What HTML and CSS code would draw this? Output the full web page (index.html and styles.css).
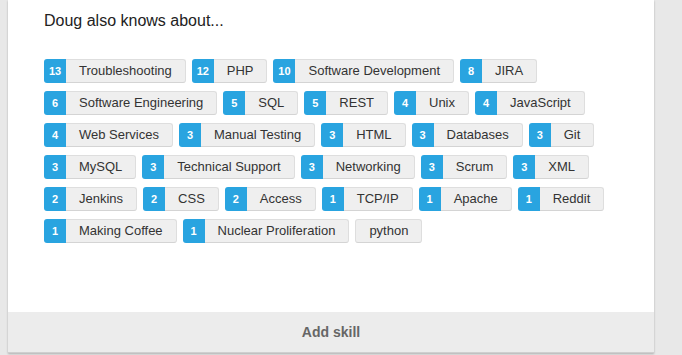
FILE: index.html
```html
<!doctype html>
<html lang="en">
    <head>
        <meta charset="UTF-8" />
        <title>Doug also knows about</title>
        <link rel="stylesheet" href="styles.css">
    </head>
    <body>
        <div class="card">
            <div class="card-body">
                <h3 class="card-title">Doug also knows about...</h3>

                <ul class="skills">
                    <li class="skill"><span class="count">13</span><span class="name">Troubleshooting</span></li>
                    <li class="skill"><span class="count">12</span><span class="name">PHP</span></li>
                    <li class="skill"><span class="count">10</span><span class="name">Software Development</span></li>
                    <li class="skill"><span class="count">8</span><span class="name">JIRA</span></li>
                    <li class="skill"><span class="count">6</span><span class="name">Software Engineering</span></li>
                    <li class="skill"><span class="count">5</span><span class="name">SQL</span></li>
                    <li class="skill"><span class="count">5</span><span class="name">REST</span></li>
                    <li class="skill"><span class="count">4</span><span class="name">Unix</span></li>
                    <li class="skill"><span class="count">4</span><span class="name">JavaScript</span></li>
                    <li class="skill"><span class="count">4</span><span class="name">Web Services</span></li>
                    <li class="skill"><span class="count">3</span><span class="name">Manual Testing</span></li>
                    <li class="skill"><span class="count">3</span><span class="name">HTML</span></li>
                    <li class="skill"><span class="count">3</span><span class="name">Databases</span></li>
                    <li class="skill"><span class="count">3</span><span class="name">Git</span></li>
                    <li class="skill"><span class="count">3</span><span class="name">MySQL</span></li>
                    <li class="skill"><span class="count">3</span><span class="name">Technical Support</span></li>
                    <li class="skill"><span class="count">3</span><span class="name">Networking</span></li>
                    <li class="skill"><span class="count">3</span><span class="name">Scrum</span></li>
                    <li class="skill"><span class="count">3</span><span class="name">XML</span></li>
                    <li class="skill"><span class="count">2</span><span class="name">Jenkins</span></li>
                    <li class="skill"><span class="count">2</span><span class="name">CSS</span></li>
                    <li class="skill"><span class="count">2</span><span class="name">Access</span></li>
                    <li class="skill"><span class="count">1</span><span class="name">TCP/IP</span></li>
                    <li class="skill"><span class="count">1</span><span class="name">Apache</span></li>
                    <li class="skill"><span class="count">1</span><span class="name">Reddit</span></li>
                    <li class="skill"><span class="count">1</span><span class="name">Making Coffee</span></li>
                    <li class="skill"><span class="count">1</span><span class="name">Nuclear Proliferation</span></li>
                    <li class="skill"><span class="name no-count">python</span></li>
                </ul>
            </div>

            <a class="card-footer" href="#">Add skill</a>
        </div>
    </body>
</html>
```

FILE: styles.css
```css
:root {
    --page-background: #e8e8e8;
    --card-background: #ffffff;
    --footer-background: #ececec;
    --badge-color: #29a4e0;
    --tag-background: #efefef;
    --tag-border: #dedede;
    --text-color: #333333;
}

body {
    margin: 0;
    padding: 0 28px 2px 8px;
    background-color: var(--page-background);
    font-family: "Liberation Sans", Arial, sans-serif;
    color: var(--text-color);
}

.card {
    width: 646px;
    height: 353px;
    background-color: var(--card-background);
    box-shadow: 0 1px 2px rgba(0, 0, 0, 0.25);
    display: flex;
    flex-direction: column;
}

.card-body {
    flex: 1;
    padding: 11px 36px 0 36px;
}

.card-title {
    margin: 0 0 28px;
    font-size: 16px;
    font-weight: 400;
    line-height: 20px;
    color: #222;
}

.skills {
    list-style: none;
    margin: 0;
    padding: 0;
    display: flex;
    flex-wrap: wrap;
    gap: 8px 6px;
}

.skill {
    display: flex;
    height: 24px;
    font-size: 13px;
}

.count {
    width: 22px;
    background-color: var(--badge-color);
    color: #fff;
    font-size: 11px;
    font-weight: 700;
    line-height: 24px;
    text-align: center;
    border-radius: 3px 0 0 3px;
}

.name {
    padding: 0 13px;
    line-height: 22px;
    background-color: var(--tag-background);
    border: 1px solid var(--tag-border);
    border-left: none;
    border-bottom-color: #d4d4d4;
    border-radius: 0 3px 3px 0;
}

.name.no-count {
    border-left: 1px solid var(--tag-border);
    border-radius: 3px;
}

.card-footer {
    display: block;
    height: 40px;
    line-height: 40px;
    background-color: var(--footer-background);
    border-bottom: 1px solid #cfcfcf;
    text-align: center;
    text-decoration: none;
    font-size: 14px;
    font-weight: 700;
    color: #666;
}
```
